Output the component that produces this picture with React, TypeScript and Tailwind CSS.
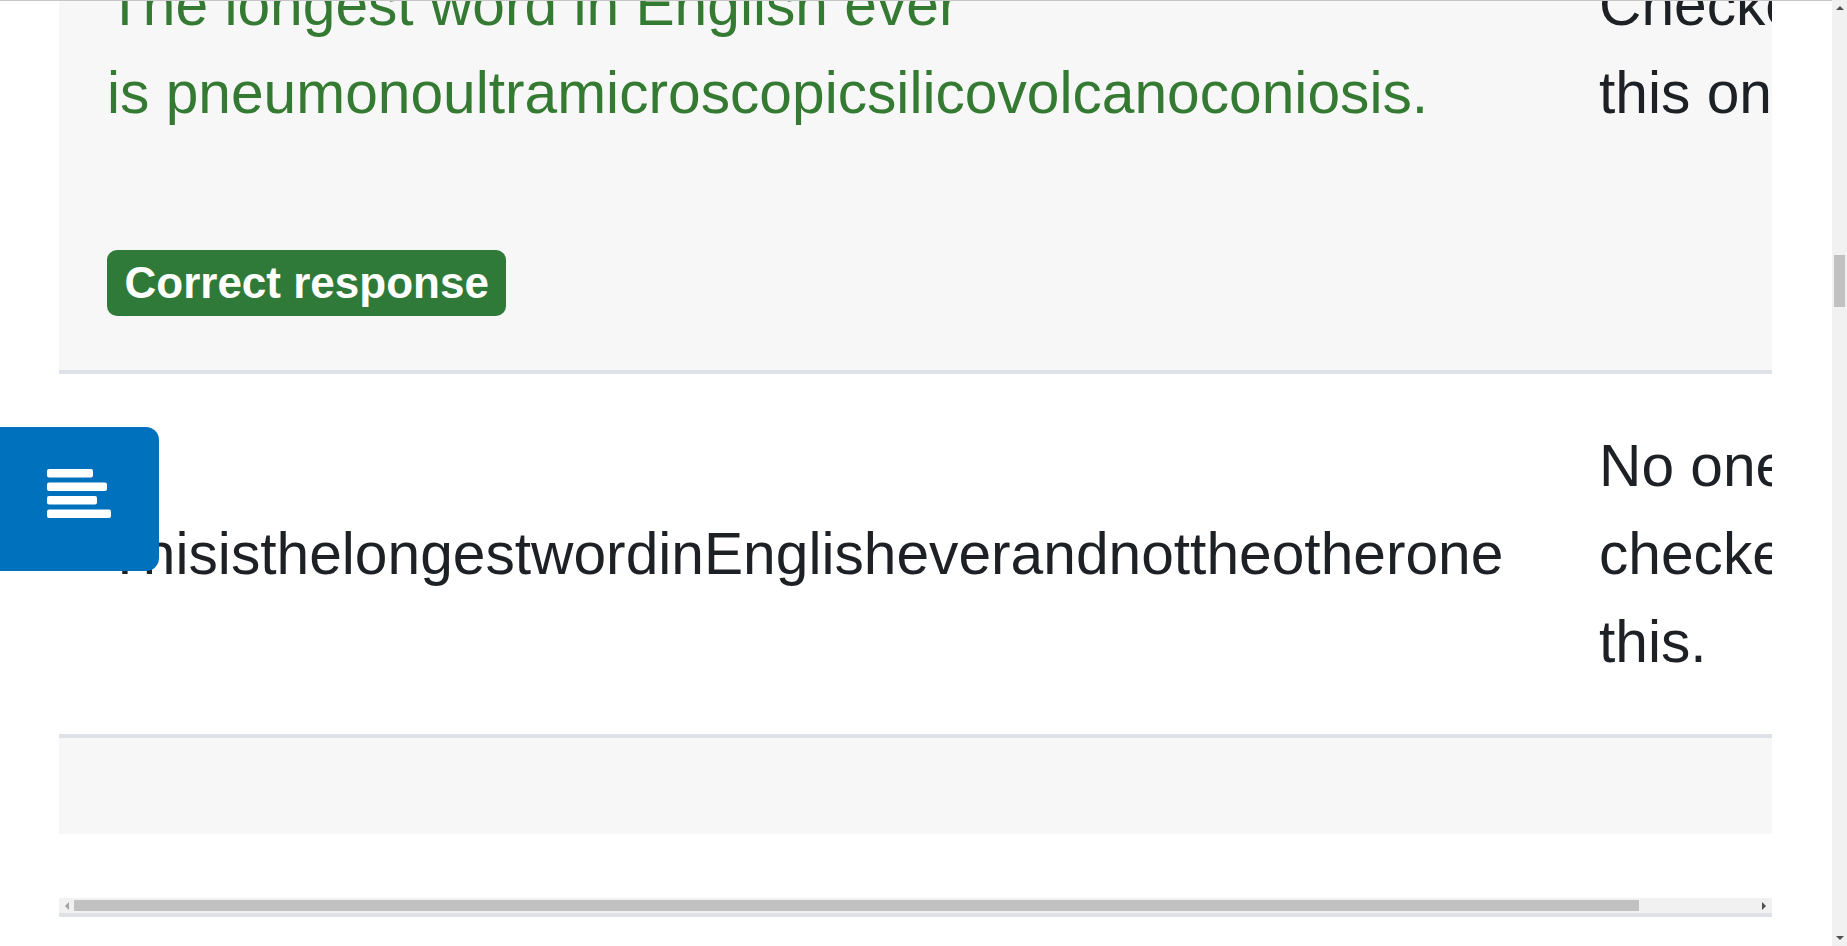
import React from 'react';

// response analysis table, page scrolled part way down
const rowCell = 'px-[48px]';

function DrawerToggle() {
  return (
    <button
      type="button"
      aria-label="Open course index"
      className="absolute left-0 top-[427px] flex h-[144px] w-[159px] items-start rounded-r-[13px] bg-[#0071bc] pl-[47px] pt-[42px]"
    >
      <svg width="64" height="50" viewBox="0 0 64 50" fill="#ffffff">
        <rect x="0" y="0" width="46" height="8.5" rx="2" />
        <rect x="0" y="13.5" width="60" height="8.5" rx="2" />
        <rect x="0" y="27" width="50" height="8.5" rx="2" />
        <rect x="0" y="40.5" width="64" height="8.5" rx="2" />
      </svg>
    </button>
  );
}

function PageScrollbar() {
  return (
    <div className="flex h-full w-[15px] shrink-0 flex-col bg-[#f1f1f1]">
      <div className="flex h-[15px] items-center justify-center">
        <svg width="8" height="5" viewBox="0 0 8 5">
          <path d="M0 5 L4 1 L8 5 Z" fill="#505050" />
        </svg>
      </div>
      <div className="mx-[2px] mt-[240px] h-[52px] bg-[#c1c1c1]" />
      <div className="flex-1" />
      <div className="flex h-[15px] items-center justify-center">
        <svg width="8" height="5" viewBox="0 0 8 5">
          <path d="M0 0 L8 0 L4 4 Z" fill="#505050" />
        </svg>
      </div>
    </div>
  );
}

function TableScrollbar() {
  return (
    <div className="flex h-[15px] items-center bg-[#f1f1f1]">
      <div className="flex h-[15px] w-[15px] shrink-0 items-center justify-center">
        <svg width="5" height="8" viewBox="0 0 5 8">
          <path d="M5 0 L5 8 L1 4 Z" fill="#a3a3a3" />
        </svg>
      </div>
      <div className="h-[11px] w-[1565px] bg-[#c1c1c1]" />
      <div className="flex-1" />
      <div className="flex h-[15px] w-[15px] shrink-0 items-center justify-center">
        <svg width="5" height="8" viewBox="0 0 5 8">
          <path d="M0 0 L4 4 L0 8 Z" fill="#505050" />
        </svg>
      </div>
    </div>
  );
}

export default function App() {
  return (
    <div className="relative flex h-[946px] overflow-hidden bg-white font-['Liberation_Sans',Arial,sans-serif] text-[58.7px] leading-[88px] text-[#1d2125]">
      <main className="min-w-0 flex-1 pl-[59px] pr-[60px]">
        <div className="-mt-[87px] border-b-4 border-[#dee2e6]">
          <div className="overflow-hidden">
            <div className="w-[1842px] pb-[64px]">
              {/* correct response row */}
              <div className="grid grid-cols-[1492px_350px] items-start border-b-4 border-[#dee2e6] bg-[#f7f7f7]">
                <div className={`${rowCell} pt-[48px] pb-[54px]`}>
                  <p className="text-[#357a32]">
                    The longest word in English ever
                    <br />
                    is pneumonoultramicroscopicsilicovolcanoconiosis.
                  </p>
                  <span className="mt-[113px] block w-fit rounded-[10px] bg-[#2f7a38] px-[17.5px] py-[11px] text-[44px] font-bold leading-none text-white">
                    Correct response
                  </span>
                </div>
                <div className={`${rowCell} pt-[48px]`}>Checked this one.</div>
              </div>

              <div className="grid grid-cols-[1492px_350px] items-center border-b-4 border-[#dee2e6] bg-white">
                <div className={`${rowCell} py-[48px]`}>ThisisthelongestwordinEnglisheverandnottheotherone</div>
                <div className={`${rowCell} py-[48px]`}>No one checked this.</div>
              </div>

              <div className="h-[96px] bg-[#f7f7f7]" />
            </div>
          </div>
          <TableScrollbar />
        </div>
      </main>

      <PageScrollbar />

      {/* bottom edge of the fixed header */}
      <div className="absolute left-0 right-[15px] top-0 h-px bg-[#c6c6c6]" />
      <DrawerToggle />
    </div>
  );
}
